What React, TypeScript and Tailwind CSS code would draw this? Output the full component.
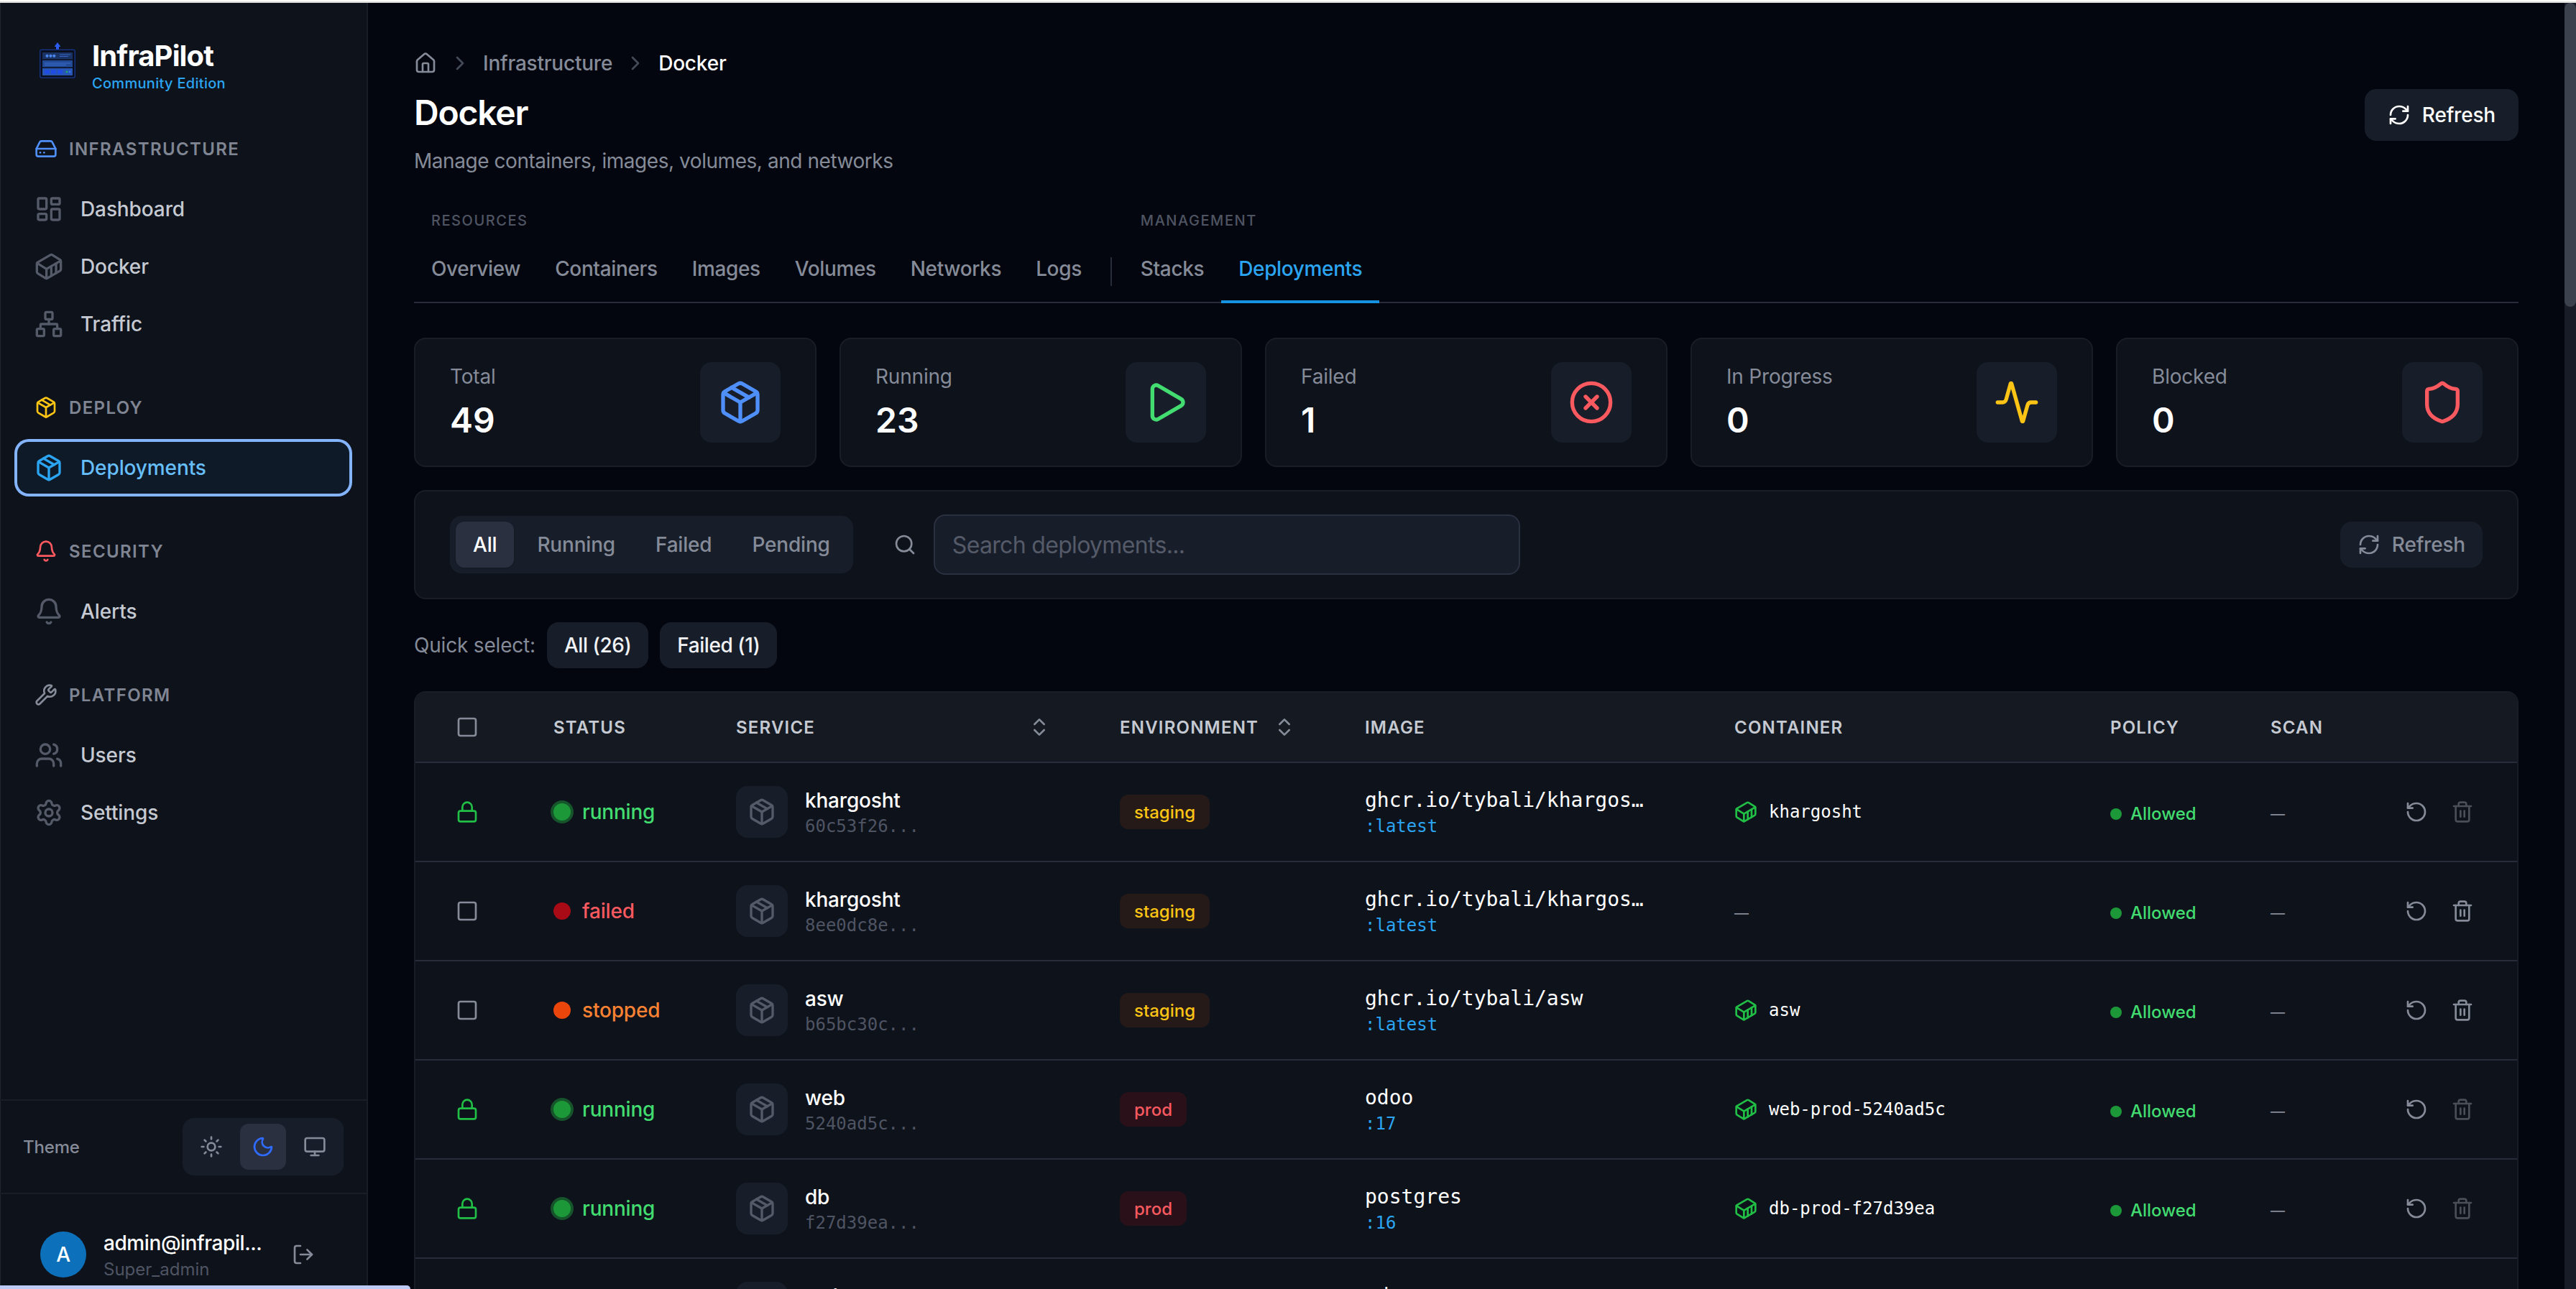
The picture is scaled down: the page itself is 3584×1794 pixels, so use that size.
import { useState } from 'react';
import {
  Activity,
  Bell,
  ChevronRight,
  ChevronsUpDown,
  CircleX,
  Container,
  HardDrive,
  House,
  LayoutDashboard,
  Lock,
  LogOut,
  Monitor,
  Moon,
  Network,
  Package,
  Play,
  RefreshCw,
  RotateCcw,
  Search,
  Settings,
  Shield,
  Square,
  Sun,
  Trash2,
  Users,
  Wrench,
} from 'lucide-react';

const mono = "font-['DejaVu_Sans_Mono',monospace] tracking-normal";

const navSections = [
  {
    title: 'INFRASTRUCTURE',
    icon: HardDrive,
    color: 'text-[#4f8ff9]',
    items: [
      { name: 'Dashboard', icon: LayoutDashboard },
      { name: 'Docker', icon: Container },
      { name: 'Traffic', icon: Network },
    ],
  },
  {
    title: 'DEPLOY',
    icon: Package,
    color: 'text-[#fcc414]',
    items: [{ name: 'Deployments', icon: Package }],
  },
  {
    title: 'SECURITY',
    icon: Bell,
    color: 'text-[#f9595f]',
    items: [{ name: 'Alerts', icon: Bell }],
  },
  {
    title: 'PLATFORM',
    icon: Wrench,
    color: 'text-[#858b98]',
    items: [
      { name: 'Users', icon: Users },
      { name: 'Settings', icon: Settings },
    ],
  },
];

const stats = [
  { label: 'Total', value: 49, icon: Package, color: 'text-[#4f8ff9]' },
  { label: 'Running', value: 23, icon: Play, color: 'text-[#42dc70]' },
  { label: 'Failed', value: 1, icon: CircleX, color: 'text-[#f9595f]' },
  { label: 'In Progress', value: 0, icon: Activity, color: 'text-[#fcc414]' },
  { label: 'Blocked', value: 0, icon: Shield, color: 'text-[#f9595f]' },
];

type Deployment = {
  status: 'running' | 'failed' | 'stopped';
  service: string;
  hash: string;
  env: 'staging' | 'prod';
  image: string;
  tag: string;
  container?: string;
};

const deployments: Deployment[] = [
  { status: 'running', service: 'khargosht', hash: '60c53f26', env: 'staging', image: 'ghcr.io/tybali/khargos…', tag: 'latest', container: 'khargosht' },
  { status: 'failed', service: 'khargosht', hash: '8ee0dc8e', env: 'staging', image: 'ghcr.io/tybali/khargos…', tag: 'latest' },
  { status: 'stopped', service: 'asw', hash: 'b65bc30c', env: 'staging', image: 'ghcr.io/tybali/asw', tag: 'latest', container: 'asw' },
  { status: 'running', service: 'web', hash: '5240ad5c', env: 'prod', image: 'odoo', tag: '17', container: 'web-prod-5240ad5c' },
  { status: 'running', service: 'db', hash: 'f27d39ea', env: 'prod', image: 'postgres', tag: '16', container: 'db-prod-f27d39ea' },
  { status: 'running', service: 'web', hash: '91b04c7d', env: 'prod', image: 'odoo', tag: '17', container: 'web-prod-91b04c7d' },
];

const statusStyles = {
  running: { dot: 'bg-[#1d9839] ring-4 ring-[#16552b]', text: 'text-[#42dc70]' },
  failed: { dot: 'bg-[#a80a16]', text: 'text-[#f9595f]' },
  stopped: { dot: 'bg-[#ea460c]', text: 'text-[#fb8232]' },
};

const envStyles = {
  staging: 'bg-[#261a18] text-[#fcc414]',
  prod: 'bg-[#2a1119] text-[#f9595f]',
};

const gridCols =
  'grid grid-cols-[136px_254px_534px_341px_514px_523px_223px_187px_1fr] items-center pl-14';

const Logo = () => (
  <svg className="h-[52px] w-[50px]" viewBox="0 0 50 52" fill="none">
    <path d="M25 1 L29.5 7 H27 V11 H23 V7 H20.5 Z" fill="#2a5cf0" />
    <rect x="0.75" y="11.25" width="48.5" height="39" rx="2.5" fill="#0a0f1e" stroke="#17307c" strokeWidth="1.5" />
    <rect x="4" y="15" width="42" height="9.5" fill="#1b3264" />
    <rect x="4" y="26" width="42" height="9.5" fill="#234a94" />
    <rect x="4" y="37" width="42" height="10" fill="#2756b4" />
    <circle cx="10.5" cy="19.8" r="2.1" fill="#4a86ea" />
    <circle cx="15.5" cy="19.8" r="2.1" fill="#4a86ea" />
    <circle cx="20.3" cy="19.8" r="2.1" fill="#4a86ea" />
    <path d="M28 18h15M28 20.5h12" stroke="#3566c4" />
    <path d="M7 30h36M7 32.5h30" stroke="#3a6fd0" />
    <path d="M7 39.5h7v5H7zM16 39.5h7v5h-7zM25 39.5h7v5h-7z" fill="#1f4be6" />
    <circle cx="38" cy="42" r="1.4" fill="#22a568" />
    <circle cx="42" cy="42" r="1.4" fill="#3778f0" />
  </svg>
);

const Sidebar = () => (
  <aside className="flex w-[512px] shrink-0 flex-col border-r-2 border-[#181d27] bg-[#0e121b] shadow-[inset_1px_0_0_#20252f]">
    <div className="flex h-[187px] shrink-0 items-start gap-6 pl-[55px] pt-[54px]">
      <Logo />
      <div className="-ml-[1px] -mt-[4px]">
        <div className="text-[40px] font-bold leading-[48px] tracking-[-0.022em] text-white">InfraPilot</div>
        <div className="text-[20px] font-medium leading-[28px] tracking-[0.015em] text-[#2ba5f2]">Community Edition</div>
      </div>
    </div>
    <nav className="flex flex-1 flex-col gap-16 px-6">
      {navSections.map((section) => (
        <div key={section.title}>
          <div className="flex h-8 items-center gap-4 px-6">
            <section.icon className={`size-8 ${section.color}`} />
            <span className="pt-[2px] text-[24px] font-semibold tracking-[0.057em] text-[#7f8592]">{section.title}</span>
          </div>
          <div className="mt-8 flex flex-col gap-2">
            {section.items.map((item) => {
              const active = item.name === 'Deployments';
              return (
                <a
                  key={item.name}
                  className={
                    active
                      ? 'flex h-[72px] items-center gap-6 rounded-2xl bg-[#0f1a29] px-6 text-[#66bffa] ring-4 ring-[#84b4fd]'
                      : 'flex h-[72px] items-center gap-6 rounded-2xl px-6 text-[#c5c9d1]'
                  }
                >
                  <item.icon className={active ? 'size-10 text-[#2ba5f2]' : 'size-10 text-[#555a69]'} />
                  <span className="text-[28px] font-medium tracking-[-0.004em]">{item.name}</span>
                </a>
              );
            })}
          </div>
        </div>
      ))}
    </nav>
    <div className="flex h-[130px] shrink-0 items-center justify-between border-t-2 border-[#181d27] px-8">
      <span className="pt-[2px] text-[24px] font-medium text-[#858b98]">Theme</span>
      <div className="flex gap-2 rounded-2xl bg-[#181e29] p-2 text-[#858b98]">
        <button className="flex size-16 items-center justify-center rounded-xl"><Sun className="size-8" /></button>
        <button className="flex size-16 items-center justify-center rounded-xl bg-[#2a3040] text-[#2f6bff]"><Moon className="size-8" /></button>
        <button className="flex size-16 items-center justify-center rounded-xl"><Monitor className="size-8" /></button>
      </div>
    </div>
    <div className="flex h-[134px] shrink-0 items-start border-t-2 border-[#181d27] pl-14 pt-[48px]">
      <div className="mt-1 flex size-16 items-center justify-center rounded-full bg-[#0d70ba] text-[28px] font-medium text-white">A</div>
      <div className="ml-6 w-[222px]">
        <div className="text-[28px] font-medium leading-[40px] tracking-[-0.015em] text-white">admin@infrapil...</div>
        <div className="pt-[1px] text-[24px] leading-[32px] tracking-normal text-[#4f5463]">Super_admin</div>
      </div>
      <LogOut className="ml-10 mt-5 size-8 text-[#858b98]" />
    </div>
  </aside>
);

const Tab = ({ name, active = false }: { name: string; active?: boolean }) => (
  <a
    className={
      active
        ? 'border-b-4 border-[#1593e2] px-6 pb-6 pt-6 text-[28px] font-medium leading-[40px] tracking-[-0.013em] text-[#2ba5f2]'
        : 'border-b-4 border-transparent px-6 pb-6 pt-6 text-[28px] font-medium leading-[40px] tracking-[-0.013em] text-[#858b98]'
    }
  >
    {name}
  </a>
);

const DeploymentRow = ({ row }: { row: Deployment }) => {
  const status = statusStyles[row.status];
  return (
    <div className={`${gridCols} h-[138px] border-b-2 border-[#262c39]`}>
      {row.status === 'running' ? (
        <Lock className="size-8 text-[#21bf46]" />
      ) : (
        <Square className="size-8 text-[#858b98]" />
      )}
      <div className="flex items-center gap-4 pb-[1px]">
        <span className={`size-6 rounded-full ${status.dot}`} />
        <span className={`text-[28px] font-medium ${status.text}`}>{row.status}</span>
      </div>
      <div className="flex items-center gap-6">
        <div className="flex size-[72px] items-center justify-center rounded-2xl bg-[#181e29]">
          <Package className="size-10 text-[#555a69]" />
        </div>
        <div>
          <div className="text-[28px] font-medium leading-[40px] text-white">{row.service}</div>
          <div className={`${mono} text-[24px] leading-[32px] text-[#4f5463]`}>{row.hash}...</div>
        </div>
      </div>
      <div>
        <span className={`inline-flex h-12 items-center rounded-xl px-5 pt-[2px] text-[24px] font-medium tracking-normal ${envStyles[row.env]}`}>
          {row.env}
        </span>
      </div>
      <div className={mono}>
        <div className="text-[28px] leading-[40px] text-white">{row.image}</div>
        <div className="text-[24px] leading-[32px] text-[#2ba5f2]">:{row.tag}</div>
      </div>
      {row.container ? (
        <div className="flex items-center gap-4">
          <Container className="size-8 text-[#21bf46]" />
          <span className={`${mono} text-[24px] text-white`}>{row.container}</span>
        </div>
      ) : (
        <span className="pt-[5px] text-[20px] text-[#858b98]">—</span>
      )}
      <div className="flex items-center gap-3 pt-[5px]">
        <span className="size-4 rounded-full bg-[#1d9839]" />
        <span className="pt-[1px] text-[24px] font-medium tracking-normal text-[#42dc70]">Allowed</span>
      </div>
      <span className="pt-[5px] text-[20px] text-[#858b98]">—</span>
      <div className="flex gap-8 text-[#858b98]">
        <RotateCcw className="size-8" />
        <Trash2 className={row.status === 'running' ? 'size-8 opacity-50' : 'size-8'} />
      </div>
    </div>
  );
};

const App = () => {
  const [filter, setFilter] = useState('All');
  const [search, setSearch] = useState('');

  return (
    <div className="relative flex h-[1794px] w-[3584px] flex-col overflow-hidden bg-[#03060e] font-['Inter',sans-serif] tracking-[-0.012em]">
      <div className="h-1 shrink-0 border-b-2 border-[#dcdcda] bg-[#fbfbfa]" />
      <div className="flex min-h-0 flex-1">
        <Sidebar />
        <main className="min-w-0 flex-1 overflow-hidden px-16 pt-16">
          <div className="flex h-10 items-center gap-4 text-[28px] font-medium text-[#858b98]">
            <House className="size-8" />
            <ChevronRight className="size-8 text-[#454a58]" />
            <span className="tracking-[-0.008em]">Infrastructure</span>
            <ChevronRight className="size-8 text-[#454a58]" />
            <span className="text-white">Docker</span>
          </div>

          <div className="mt-4 flex items-start justify-between">
            <div>
              <h1 className="pt-[1px] text-[48px] font-semibold leading-[64px] tracking-[-0.025em] text-white">Docker</h1>
              <p className="mt-[15px] text-[28px] leading-[40px] tracking-[-0.016em] text-[#858b98]">Manage containers, images, volumes, and networks</p>
            </div>
            <button className="flex h-[72px] items-center gap-4 rounded-2xl bg-[#181e29] px-8 text-[28px] font-medium text-white">
              <RefreshCw className="size-8" />
              Refresh
            </button>
          </div>

          <div className="mt-12 flex items-end shadow-[inset_0_-2px_0_#262c39]">
            <div>
              <div className="px-6 pb-[9px] pt-[1px] text-[20px] font-medium leading-[28px] tracking-[0.077em] text-[#4f5463]">RESOURCES</div>
              <div className="flex">
                {['Overview', 'Containers', 'Images', 'Volumes', 'Networks', 'Logs'].map((name) => (
                  <Tab key={name} name={name} />
                ))}
              </div>
            </div>
            <div className="mx-4 mb-6 h-10 w-[2px] bg-[#262c39]" />
            <div>
              <div className="px-6 pb-[9px] pt-[1px] text-[20px] font-medium leading-[28px] tracking-[0.077em] text-[#4f5463]">MANAGEMENT</div>
              <div className="flex">
                <Tab name="Stacks" />
                <Tab name="Deployments" active />
              </div>
            </div>
          </div>

          <div className="mt-12 grid grid-cols-5 gap-8">
            {stats.map((stat) => (
              <div key={stat.label} className="flex h-[180px] items-center justify-between rounded-2xl border-2 border-[#181d27] bg-[#0e121b] px-12">
                <div>
                  <div className="text-[28px] leading-[40px] text-[#858b98]">{stat.label}</div>
                  <div className="mt-2 pt-[1px] text-[48px] font-semibold leading-[63px] tracking-normal text-white">{stat.value}</div>
                </div>
                <div className="flex size-28 items-center justify-center rounded-2xl bg-[#181e29]">
                  <stat.icon className={`size-16 ${stat.color}`} />
                </div>
              </div>
            ))}
          </div>

          <div className="mt-8 flex h-[152px] items-center rounded-2xl border-2 border-[#181d27] bg-[#0e121b] px-12">
            <div className="flex gap-2 rounded-2xl bg-[#181e29] p-2">
              {['All', 'Running', 'Failed', 'Pending'].map((name) => (
                <button
                  key={name}
                  onClick={() => setFilter(name)}
                  className={
                    filter === name
                      ? 'h-16 rounded-xl bg-[#2a3040] px-6 text-[28px] font-medium text-white shadow-sm'
                      : 'h-16 rounded-xl px-6 text-[28px] font-medium text-[#858b98]'
                  }
                >
                  {name}
                </button>
              ))}
            </div>
            <Search className="ml-14 mr-6 size-8 text-[#858b98]" />
            <input
              type="text"
              placeholder="Search deployments..."
              value={search}
              onChange={(e) => setSearch(e.target.value)}
              className="h-[84px] w-[816px] rounded-2xl border-2 border-[#2a3040] bg-[#181e29] px-6 text-[32px] tracking-[-0.021em] text-white placeholder:text-[#555a69]"
            />
            <button className="ml-auto flex h-16 items-center gap-4 rounded-2xl bg-[#181e29] px-6 text-[28px] font-medium text-[#858b98]">
              <RefreshCw className="size-8" />
              Refresh
            </button>
          </div>

          <div className="mt-8 flex items-center gap-4 text-[28px]">
            <span className="text-[#858b98]">Quick select:</span>
            <button className="h-16 rounded-2xl bg-[#181e29] px-6 font-medium tracking-[-0.016em] text-[#f0f2f5]">All (26)</button>
            <button className="h-16 rounded-2xl bg-[#181e29] px-6 font-medium tracking-[-0.016em] text-[#f0f2f5]">Failed (1)</button>
          </div>

          <div className="mt-8 overflow-hidden rounded-2xl border-2 border-[#181d27] bg-[#0e121b]">
            <div className={`${gridCols} h-[98px] border-b-2 border-[#262c39] bg-[#141922] pt-[2px] text-[24px] font-semibold tracking-[0.05em] text-[#c5c9d1]`}>
              <Square className="-mt-[2px] size-8 text-[#858b98]" />
              <span>STATUS</span>
              <div className="flex items-center justify-between pr-24">
                SERVICE
                <ChevronsUpDown className="-mt-[2px] size-8 text-[#858b98]" />
              </div>
              <div className="flex items-center justify-between pr-24">
                ENVIRONMENT
                <ChevronsUpDown className="-mt-[2px] size-8 text-[#858b98]" />
              </div>
              <span>IMAGE</span>
              <span>CONTAINER</span>
              <span>POLICY</span>
              <span>SCAN</span>
            </div>
            {deployments.map((row, i) => (
              <DeploymentRow key={i} row={row} />
            ))}
          </div>
        </main>
        <div className="w-4 shrink-0 bg-[#171c27]">
          <div className="h-[423px] rounded-full bg-[#3c414e]" />
        </div>
      </div>
      {/* link preview strip at the window's lower edge */}
      <div className="absolute bottom-0 left-0 h-[5px] w-[571px] rounded-tr-md bg-[#bccaf5]" />
    </div>
  );
};

export default App;
